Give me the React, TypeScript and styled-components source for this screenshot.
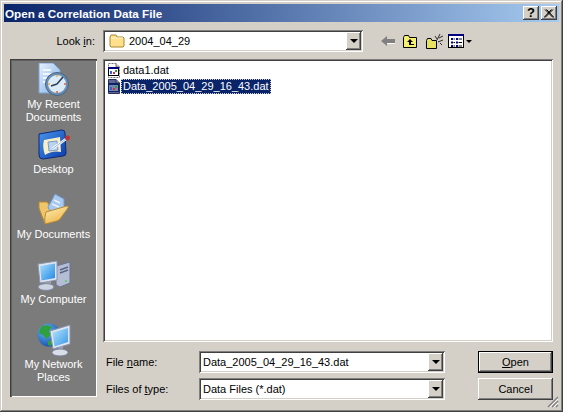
import React from 'react';
import styled, { createGlobalStyle } from 'styled-components';

const GlobalStyle = createGlobalStyle`
  html, body {
    margin: 0;
    padding: 0;
    background: #d4d0c8;
  }
`;

const Window = styled.div`
  position: relative;
  box-sizing: border-box;
  width: 563px;
  height: 412px;
  padding: 4px;
  background: #d4d0c8;
  font-family: 'Liberation Sans', Arial, sans-serif;
  font-size: 11px;
  color: #000;
  overflow: hidden;
  box-shadow: inset -1px -1px #404040, inset 1px 1px #d4d0c8,
    inset -2px -2px #808080, inset 2px 2px #fff;
`;

const TitleBar = styled.div`
  display: flex;
  align-items: center;
  height: 18px;
  padding: 0 2px 0 1px;
  background: linear-gradient(90deg, #0a246a, #a6caf0);
`;

const Title = styled.span`
  flex: 1;
  font-weight: bold;
  font-size: 11.7px;
  color: #fff;
  white-space: nowrap;
`;

const raised = `
  background: #d4d0c8;
  box-shadow: inset -1px -1px #404040, inset 1px 1px #fff,
    inset -2px -2px #808080, inset 2px 2px #d4d0c8;
`;

const sunken = `
  background: #fff;
  box-shadow: inset 1px 1px #808080, inset -1px -1px #fff,
    inset 2px 2px #404040, inset -2px -2px #d4d0c8;
`;

const CaptionButton = styled.div<{ $gap?: boolean }>`
  ${raised}
  display: flex;
  align-items: center;
  justify-content: center;
  width: 16px;
  height: 14px;
  margin-left: ${(p) => (p.$gap ? '2px' : '0')};
  font-weight: bold;
  font-size: 13px;
  line-height: 14px;
`;

const Body = styled.div`
  display: grid;
  grid-template-columns: 87px 450px;
  grid-template-rows: 22px 283px auto;
  column-gap: 6px;
  row-gap: 7px;
  padding: 8px 6px 0;
`;

const LookInLabel = styled.div`
  display: flex;
  align-items: center;
  justify-content: flex-end;
  padding-right: 2px;
  white-space: nowrap;
`;

const TopRow = styled.div`
  display: flex;
  align-items: center;
`;

const Combo = styled.div<{ $width: number; $plain?: boolean }>`
  ${sunken}
  box-sizing: border-box;
  display: flex;
  align-items: center;
  width: ${(p) => p.$width}px;
  height: 22px;
  padding: 2px 2px 2px ${(p) => (p.$plain ? '4px' : '6px')};
`;

const ComboText = styled.span`
  flex: 1;
  white-space: nowrap;
`;

const ArrowButton = styled.div`
  ${raised}
  display: flex;
  align-items: center;
  justify-content: center;
  width: 15px;
  height: 18px;
`;

const ArrowDown = styled.span<{ $small?: boolean }>`
  width: 0;
  height: 0;
  border-left: ${(p) => (p.$small ? 3 : 4)}px solid transparent;
  border-right: ${(p) => (p.$small ? 3 : 4)}px solid transparent;
  border-top: ${(p) => (p.$small ? 3 : 4)}px solid #000;
`;

const Toolbar = styled.div`
  display: flex;
  align-items: center;
  margin-left: 18px;
`;

const ToolIcon = styled.svg<{ $gap: number }>`
  display: block;
  margin-right: ${(p) => p.$gap}px;
`;

const Places = styled.div`
  grid-row: 2 / span 2;
  box-sizing: border-box;
  height: 338px;
  padding-top: 4px;
  background: #7b7b7b;
  box-shadow: inset 1px 1px #404040, inset 2px 2px #606060, inset -1px -1px #fff;
  display: flex;
  flex-direction: column;
`;

const Place = styled.div`
  display: flex;
  flex-direction: column;
  align-items: center;
  height: 65px;
  flex: none;
`;

const PlaceIcon = styled.svg`
  display: block;
  width: 36px;
  height: 34px;
  margin-bottom: 1px;
`;

const PlaceLabel = styled.div`
  color: #fff;
  text-align: center;
  line-height: 13px;
  white-space: pre-line;
`;

const FileList = styled.div`
  ${sunken}
  box-sizing: border-box;
  padding: 3px 4px;
`;

const FileRow = styled.div`
  display: flex;
  align-items: center;
  height: 16px;
`;

const FileIcon = styled.svg`
  display: block;
  flex: none;
`;

const FileName = styled.span<{ $selected?: boolean }>`
  padding: 1px 2px;
  line-height: 13px;
  white-space: nowrap;
  color: ${(p) => (p.$selected ? '#fff' : '#000')};
  background: ${(p) => (p.$selected ? '#0a246a' : 'transparent')};
  outline: ${(p) => (p.$selected ? '1px dotted #d4d0c8' : 'none')};
  outline-offset: -1px;
`;

const Form = styled.div`
  display: grid;
  grid-template-columns: 96px 246px 33px 75px;
  grid-template-rows: 22px 22px;
  row-gap: 5px;
  margin-top: 2px;
`;

const FieldLabel = styled.div`
  display: flex;
  align-items: center;
  padding-left: 3px;
  white-space: nowrap;
`;

const Button = styled.div<{ $default?: boolean }>`
  ${raised}
  grid-column: 4;
  display: flex;
  align-items: center;
  justify-content: center;
  ${(p) =>
    p.$default &&
    `box-shadow: inset 0 0 0 1px #000, inset -2px -2px #404040, inset 2px 2px #fff,
      inset -3px -3px #808080;`}
`;

const Key = styled.span`
  text-decoration: underline;
`;

const Grip = styled.svg`
  position: absolute;
  right: 4px;
  bottom: 4px;
`;

const FolderSmall = () => (
  <FileIcon width="16" height="14" viewBox="0 0 16 14" style={{ marginRight: 4 }}>
    <path d="M1 3 L2 1 H7 L8 3 H14 L15 4 V12 L14 13 H2 L1 12 Z" fill="#ffdf8c" stroke="#a8872c" />
    <path d="M2 4 H14" stroke="#fff6cf" />
  </FileIcon>
);

const DatIcon = ({ selected }: { selected?: boolean }) => (
  <FileIcon width="14" height="16" viewBox="0 0 14 16">
    <path
      d="M1.5 1.5 H9 L12.5 5 V15.5 H1.5 Z"
      fill={selected ? '#5f6694' : '#fff'}
      stroke={selected ? '#2a3058' : '#707070'}
      strokeDasharray={selected ? undefined : '2 1'}
    />
    <path d="M9 1.5 V5 H12.5" fill={selected ? '#8a90b4' : '#d4d0c8'} stroke={selected ? '#2a3058' : '#707070'} />
    <rect x="1.5" y="5.5" width="10" height="8" fill={selected ? '#7c83ac' : '#fff'} stroke={selected ? '#0a246a' : '#000'} />
    <rect x="1" y="5" width="11" height="2" fill={selected ? '#0a246a' : '#000080'} />
    <rect x="3" y="9" width="2" height="3" fill="#2f62d8" />
    <rect x="6" y="10" width="2" height="2" fill="#d83030" />
    <rect x="8" y="8" width="2" height="2" fill="#2fa040" />
  </FileIcon>
);

const RecentIcon = () => (
  <PlaceIcon viewBox="0 0 36 34">
    <defs>
      <linearGradient id="recentPage" x1="0" y1="0" x2="1" y2="1">
        <stop offset="0" stopColor="#e6f1fd" />
        <stop offset="1" stopColor="#7eaee6" />
      </linearGradient>
    </defs>
    <path d="M3 0 H17 L24 7 V30 H3 Z" fill="url(#recentPage)" stroke="#7ea4d4" />
    <path d="M7 7 H15 M7 11 H17 M7 15 H12 M7 19 H11" stroke="#fff" strokeWidth="1.4" />
    <circle cx="21" cy="21" r="11.5" fill="#6d8fb3" stroke="#46627f" />
    <circle cx="21" cy="21" r="9" fill="#dcebf7" />
    <path d="M21 21 L27 14 M21 21 L15 23" stroke="#2c3f58" strokeWidth="1.6" />
    <circle cx="21" cy="13" r="1" fill="#f0b040" />
    <circle cx="29" cy="21" r="1" fill="#e06030" />
    <circle cx="13" cy="21" r="1" fill="#f0b040" />
    <circle cx="21" cy="29" r="1" fill="#e06030" />
  </PlaceIcon>
);

const DesktopIcon = () => (
  <PlaceIcon viewBox="0 0 36 34">
    <defs>
      <linearGradient id="deskBlue" x1="0" y1="0" x2="1" y2="1">
        <stop offset="0" stopColor="#4a96ee" />
        <stop offset="1" stopColor="#0a3aa8" />
      </linearGradient>
    </defs>
    <path d="M3 6 L26 2 Q29 2 29 5 L30 25 Q30 28 27 28 L7 31 Q3 31 3 27 Z" fill="url(#deskBlue)" stroke="#0c2a78" />
    <path d="M8 12 L24 9 L25 24 Q16 22 9 27 Q6 19 8 12 Z" fill="#f6efc8" />
    <path d="M12 14 L21 13 L22 22 L13 23 Z" fill="#b9d2f0" stroke="#7c9cc8" />
    <path d="M16 21 L30 11" stroke="#fff" strokeWidth="2.4" />
    <path d="M16 21 L30 11" stroke="#7ca6dc" strokeWidth="0.8" />
    <circle cx="31.5" cy="10" r="2.4" fill="#c83030" />
  </PlaceIcon>
);

const DocumentsIcon = () => (
  <PlaceIcon viewBox="0 0 36 34">
    <defs>
      <linearGradient id="docFolder" x1="0" y1="0" x2="0.6" y2="1">
        <stop offset="0" stopColor="#fff0b8" />
        <stop offset="1" stopColor="#eeb54a" />
      </linearGradient>
    </defs>
    <path d="M3 9 L11 9 L14 13 L16 28 L9 30 Q6 24 3 15 Z" fill="#f0c468" stroke="#b48a34" />
    <path d="M12 14 L19 1 L28 6 L28 18 L16 22 Z" fill="#a9c8ee" stroke="#6f97cc" />
    <path d="M18 7 L24 10 M16 11 L23 14" stroke="#e8f2fc" strokeWidth="1.5" />
    <path d="M10 19 L31 13 Q33 13 32 15 L24 26 Q23 27 21 28 L9 31 Q8 25 10 19 Z" fill="url(#docFolder)" stroke="#b48a34" />
  </PlaceIcon>
);

const ComputerIcon = () => (
  <PlaceIcon viewBox="0 0 36 34">
    <defs>
      <linearGradient id="compScreen" x1="0" y1="0" x2="1" y2="1">
        <stop offset="0" stopColor="#a8e0fc" />
        <stop offset="1" stopColor="#1f86e4" />
      </linearGradient>
    </defs>
    <path d="M20 8 L34 4 V25 L24 29 L20 27 Z" fill="#b4bdd4" stroke="#6a7390" />
    <path d="M24 12 L32 9 M24 15 L32 12" stroke="#5a6484" strokeWidth="1.4" />
    <circle cx="30" cy="23" r="1" fill="#50d060" />
    <path d="M2 6 L21 3 V22 L4 25 Z" fill="#dfe4ef" stroke="#8b94ac" />
    <path d="M4 8 L19 5.5 V20 L5.5 22.5 Z" fill="url(#compScreen)" />
    <path d="M9 24 L15 23 V26 L9 27 Z" fill="#9aa3ba" />
    <ellipse cx="10" cy="29" rx="8" ry="3.4" fill="#cdd3e0" stroke="#7a849c" />
  </PlaceIcon>
);

const NetworkIcon = () => (
  <PlaceIcon viewBox="0 0 36 34">
    <defs>
      <radialGradient id="netGlobe" cx="0.35" cy="0.3" r="0.8">
        <stop offset="0" stopColor="#6cb6f4" />
        <stop offset="1" stopColor="#0f4aa8" />
      </radialGradient>
      <linearGradient id="netScreen" x1="0" y1="0" x2="1" y2="1">
        <stop offset="0" stopColor="#b4e4fc" />
        <stop offset="1" stopColor="#3a98e8" />
      </linearGradient>
    </defs>
    <circle cx="13" cy="12" r="11.5" fill="url(#netGlobe)" />
    <path d="M6 3 Q12 1 16 4 L13 8 L15 12 L10 16 L7 12 L3 10 Q3 6 6 3 Z" fill="#2fa040" />
    <path d="M12 18 L17 17 L15 23 L12 22 Z" fill="#2fa040" />
    <path d="M14 8 L34 2 V21 L17 26 Z" fill="#e0e5f0" stroke="#8b94ac" />
    <path d="M16.5 9.5 L32 5 V19 L18.5 23.5 Z" fill="url(#netScreen)" />
    <path d="M22 25 L27 23 V27 L22 28 Z" fill="#9aa3ba" />
    <ellipse cx="24" cy="29.5" rx="8" ry="3.5" fill="#d8dde8" stroke="#7a849c" />
  </PlaceIcon>
);

const Cross = () => (
  <svg width="10" height="9" viewBox="0 0 10 9">
    <path d="M1 0.5 L9 8.5 M2.5 0.5 L10 8.5 M9 0.5 L1 8.5 M7.5 0.5 L0 8.5" stroke="#000" strokeWidth="1" />
  </svg>
);

const App: React.FC = () => (
  <Window>
    <GlobalStyle />
    <TitleBar>
      <Title>Open a Correlation Data File</Title>
      <CaptionButton>?</CaptionButton>
      <CaptionButton $gap>
        <Cross />
      </CaptionButton>
    </TitleBar>
    <Body>
      <LookInLabel>
        <span>
          Look <Key>i</Key>n:
        </span>
      </LookInLabel>
      <TopRow>
        <Combo $width={260}>
          <FolderSmall />
          <ComboText>2004_04_29</ComboText>
          <ArrowButton>
            <ArrowDown />
          </ArrowButton>
        </Combo>
        <Toolbar>
          <ToolIcon $gap={7} width="14" height="12" viewBox="0 0 14 12">
            <path d="M0 6 L6 1 V4 H14 V8 H6 V11 Z" fill="#808080" />
            <path d="M6 8 H14 V9 H6 Z" fill="#fff" />
          </ToolIcon>
          <ToolIcon $gap={7} width="16" height="14" viewBox="0 0 16 14">
            <path d="M1.5 3.5 L2.5 1.5 H6.5 L7.5 3.5 H14.5 V13.5 H1.5 Z" fill="#f4f070" stroke="#000" />
            <path d="M8 5 L5 8 H7 V11 H12 V10 H9 V8 H11 Z" fill="#000" />
          </ToolIcon>
          <ToolIcon $gap={5} width="18" height="16" viewBox="0 0 18 16">
            <path d="M1.5 7.5 L2.5 5.5 H6 L7 7.5 H11.5 V15.5 H1.5 Z" fill="#e8e060" stroke="#000" />
            <path d="M12 7 L15 1 M13 9 L18 7 M10 3 L12 6 M14 5 L18 3 M15 10 L17 12" stroke="#000" strokeWidth="0.8" />
          </ToolIcon>
          <ToolIcon $gap={2} width="16" height="14" viewBox="0 0 16 14">
            <rect x="0.5" y="0.5" width="15" height="13" fill="#fff" stroke="#000" />
            <rect x="0" y="0" width="16" height="2" fill="#000080" />
            <path d="M3 4 H5 V6 H3 Z M3 7.5 H5 V9.5 H3 Z M3 11 H5 V13 H3 Z M8 4 H10 V6 H8 Z M8 7.5 H10 V9.5 H8 Z M8 11 H10 V13 H8 Z" fill="#000080" />
            <path d="M5.5 5 H7 M5.5 8.5 H7 M5.5 12 H7 M10.5 5 H14 M10.5 8.5 H14 M10.5 12 H14" stroke="#000" />
          </ToolIcon>
          <ArrowDown $small />
        </Toolbar>
      </TopRow>
      <Places>
        <Place>
          <RecentIcon />
          <PlaceLabel>{'My Recent\nDocuments'}</PlaceLabel>
        </Place>
        <Place>
          <DesktopIcon />
          <PlaceLabel>Desktop</PlaceLabel>
        </Place>
        <Place>
          <DocumentsIcon />
          <PlaceLabel>My Documents</PlaceLabel>
        </Place>
        <Place>
          <ComputerIcon />
          <PlaceLabel>My Computer</PlaceLabel>
        </Place>
        <Place>
          <NetworkIcon />
          <PlaceLabel>{'My Network\nPlaces'}</PlaceLabel>
        </Place>
      </Places>
      <FileList>
        <FileRow>
          <DatIcon />
          <FileName>data1.dat</FileName>
        </FileRow>
        <FileRow>
          <DatIcon selected />
          <FileName $selected>Data_2005_04_29_16_43.dat</FileName>
        </FileRow>
      </FileList>
      <Form>
        <FieldLabel>
          <span>
            File <Key>n</Key>ame:
          </span>
        </FieldLabel>
        <Combo $width={246} $plain>
          <ComboText>Data_2005_04_29_16_43.dat</ComboText>
          <ArrowButton>
            <ArrowDown />
          </ArrowButton>
        </Combo>
        <span />
        <Button $default>
          <span>
            <Key>O</Key>pen
          </span>
        </Button>
        <FieldLabel>
          <span>
            Files of <Key>t</Key>ype:
          </span>
        </FieldLabel>
        <Combo $width={246} $plain>
          <ComboText>Data Files (*.dat)</ComboText>
          <ArrowButton>
            <ArrowDown />
          </ArrowButton>
        </Combo>
        <span />
        <Button>Cancel</Button>
      </Form>
    </Body>
    <Grip width="12" height="12" viewBox="0 0 12 12">
      <path d="M11 1 L1 11 M11 5 L5 11 M11 9 L9 11" stroke="#808080" strokeWidth="1.4" />
      <path d="M11 3 L3 11 M11 7 L7 11" stroke="#fff" />
    </Grip>
  </Window>
);

export default App;
